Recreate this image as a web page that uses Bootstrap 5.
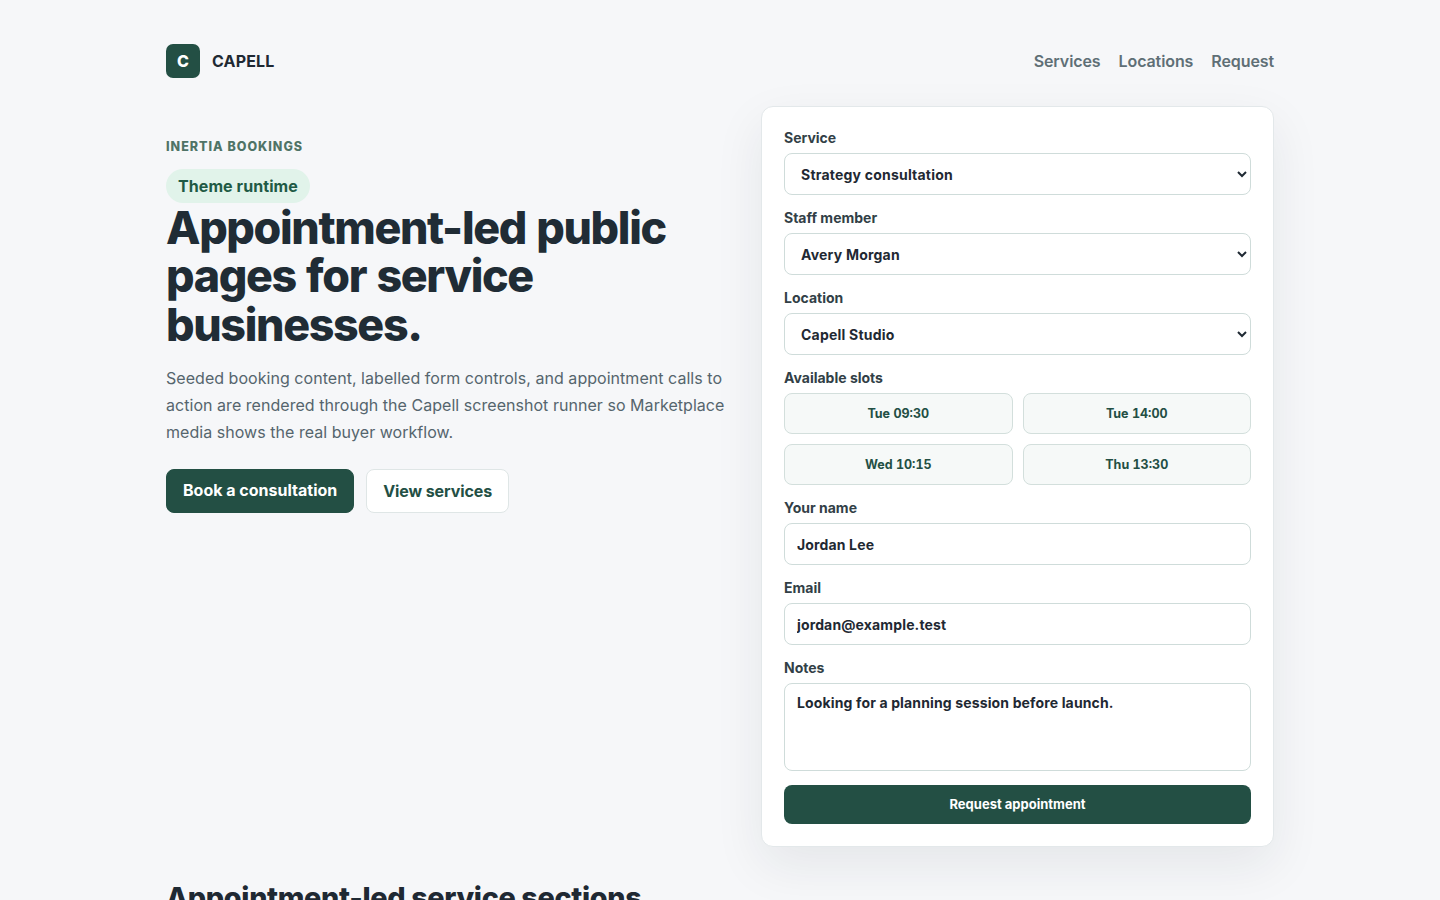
<!DOCTYPE html>
<html lang="en">
<head>
    <meta charset="UTF-8">
    <meta name="viewport" content="width=device-width, initial-scale=1.0">
    <title>Capell Bookings</title>
    <link rel="stylesheet" href="https://cdn.jsdelivr.net/npm/bootstrap@5.3.0/dist/css/bootstrap.min.css">
    <style>
        body {
            background-color: #f6f7f9;
            font-family: Inter, "Liberation Sans", sans-serif;
            color: #1f2933;
        }
        .page {
            max-width: 1140px;
            padding: 0 16px;
            margin: 0 auto;
        }
        .site-header {
            padding-top: 44px;
            height: 106px;
        }
        .logo-mark {
            width: 34px;
            height: 34px;
            border-radius: 7px;
            background: #234f44;
            color: #fff;
            font-size: 16px;
            font-weight: 800;
        }
        .logo-text {
            font-size: 16px;
            font-weight: 700;
            letter-spacing: .01em;
            color: #1f2933;
        }
        .site-nav {
            height: 34px;
            gap: 18px;
        }
        .site-nav a {
            color: #5f6f76;
            font-size: 16px;
            font-weight: 600;
            letter-spacing: -.006em;
            text-decoration: none;
        }
        .hero {
            display: grid;
            grid-template-columns: 1fr 513px;
            gap: 32px;
            align-items: start;
        }
        .eyebrow {
            font-size: 12.5px;
            font-weight: 800;
            letter-spacing: .08em;
            color: #4f7366;
            line-height: 20px;
            margin-top: 31px;
            margin-bottom: 12px;
        }
        .pill {
            background: #e1f3ea;
            color: #1f5a45;
            font-size: 16px;
            font-weight: 700;
            letter-spacing: .005em;
            height: 34px;
            padding: 0 12px;
            line-height: 34px;
            border-radius: 17px;
        }
        .hero h1 {
            font-size: 44.8px;
            font-weight: 800;
            line-height: 48.4px;
            letter-spacing: -.03em;
            word-spacing: .04em;
            color: #202c35;
            margin: 1px 0 16px;
        }
        .lead-copy {
            font-size: 16px;
            letter-spacing: .04px;
            line-height: 27px;
            color: #55656d;
            margin-bottom: 23px;
        }
        .btn-main, .btn-main:hover {
            background: #234f44;
            color: #fff;
            border: 1px solid #234f44;
            line-height: 40px;
        }
        .btn-alt, .btn-alt:hover {
            background: #fff;
            color: #234f44;
            border: 1px solid #dfe6e6;
            line-height: 42px;
            letter-spacing: -.1px;
        }
        .btn-main, .btn-alt {
            height: 44px;
            padding: 0 16px;
            font-size: 16px;
            font-weight: 700;
            border-radius: 8px;
        }
        .booking-card {
            background: #fff;
            border: 1px solid #e3e8ea;
            border-radius: 12px;
            padding: 20px 22px 22px;
            box-shadow: 0 18px 50px rgba(31, 41, 51, .08);
        }
        .booking-card .form-label {
            font-size: 14px;
            font-weight: 700;
            line-height: 21px;
            color: #323f47;
            margin-bottom: 5px;
        }
        .field {
            margin-bottom: 12px;
        }
        .booking-card .form-control,
        .booking-card .form-select {
            height: 42px;
            font-size: 14px;
            font-weight: 700;
            letter-spacing: .01em;
            color: #1f2933;
            border: 1px solid #cfdcda;
            border-radius: 8px;
            padding: 0 12px;
        }
        .booking-card .form-select {
            appearance: auto;
            background-image: none;
            letter-spacing: .015em;
        }
        .booking-card textarea.form-control {
            height: 88px;
            padding-top: 8px;
            resize: none;
        }
        .slots {
            display: grid;
            grid-template-columns: 1fr 1fr;
            gap: 10px;
        }
        .slot, .slot:hover {
            height: 41px;
            padding-top: 8px;
            background: #f6f9f8;
            color: #234f44;
            border: 1px solid #d3dfdc;
            border-radius: 8px;
            font-size: 12.5px;
            font-weight: 700;
            font-variant-numeric: tabular-nums;
        }
        .submit, .submit:hover {
            height: 39px;
            background: #234f44;
            color: #fff;
            border: 0;
            border-radius: 8px;
            font-size: 13px;
            font-weight: 700;
            margin-top: 2px;
        }
        .section-title {
            font-size: 28.8px;
            font-weight: 800;
            letter-spacing: -.012em;
            line-height: 34px;
            color: #1f2933;
            margin-top: 34px;
        }
    </style>
</head>
<body>
    <div class="page">
        <!-- Header -->
        <header class="site-header d-flex justify-content-between align-items-start">
            <a href="#" class="d-flex align-items-center gap-2 text-decoration-none">
                <span class="logo-mark d-flex align-items-center justify-content-center">C</span>
                <span class="logo-text ms-1">CAPELL</span>
            </a>
            <nav class="site-nav d-flex align-items-center">
                <a href="#">Services</a>
                <a href="#">Locations</a>
                <a href="#">Request</a>
            </nav>
        </header>

        <main class="hero">
            <!-- Intro -->
            <div>
                <div class="eyebrow">INERTIA BOOKINGS</div>
                <span class="pill d-inline-block">Theme runtime</span>
                <h1>Appointment-led public pages for service businesses.</h1>
                <p class="lead-copy">Seeded booking content, labelled form controls, and appointment calls to action are rendered through the Capell screenshot runner so Marketplace media shows the real buyer workflow.</p>
                <div class="d-flex gap-2">
                    <a href="#" class="btn btn-main">Book a consultation</a>
                    <a href="#" class="btn btn-alt ms-1">View services</a>
                </div>
            </div>

            <!-- Booking form -->
            <form class="booking-card" onsubmit="return false;">
                <div class="field">
                    <label class="form-label d-block" for="service">Service</label>
                    <select id="service" class="form-select">
                        <option>Strategy consultation</option>
                    </select>
                </div>
                <div class="field">
                    <label class="form-label d-block" for="staff">Staff member</label>
                    <select id="staff" class="form-select">
                        <option>Avery Morgan</option>
                    </select>
                </div>
                <div class="field">
                    <label class="form-label d-block" for="location">Location</label>
                    <select id="location" class="form-select">
                        <option>Capell Studio</option>
                    </select>
                </div>
                <div class="field">
                    <div class="form-label">Available slots</div>
                    <div class="slots">
                        <button type="button" class="btn slot">Tue 09:30</button>
                        <button type="button" class="btn slot">Tue 14:00</button>
                        <button type="button" class="btn slot">Wed 10:15</button>
                        <button type="button" class="btn slot">Thu 13:30</button>
                    </div>
                </div>
                <div class="field">
                    <label class="form-label d-block" for="name">Your name</label>
                    <input id="name" type="text" class="form-control" value="Jordan Lee">
                </div>
                <div class="field">
                    <label class="form-label d-block" for="email">Email</label>
                    <input id="email" type="email" class="form-control" value="jordan@example.test">
                </div>
                <div class="field">
                    <label class="form-label d-block" for="notes">Notes</label>
                    <textarea id="notes" class="form-control">Looking for a planning session before launch.</textarea>
                </div>
                <button type="submit" class="btn submit w-100">Request appointment</button>
            </form>
        </main>

        <h2 class="section-title">Appointment-led service sections</h2>
    </div>
</body>
</html>
